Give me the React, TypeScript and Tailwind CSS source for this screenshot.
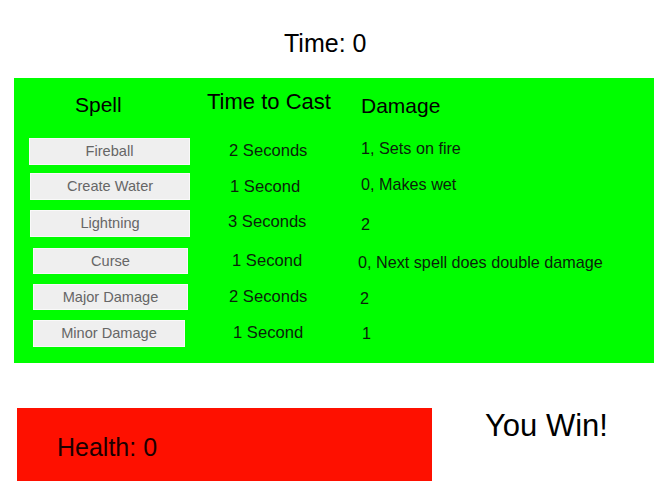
import React from 'react';

interface SpellRow {
  name: string;
  time: string;
  damage: string;
  rowClass: string;
  btnClass: string;
  timeClass: string;
  dmgClass: string;
}

const spells: SpellRow[] = [
  {
    name: 'Fireball',
    time: '2 Seconds',
    damage: '1, Sets on fire',
    rowClass: 'h-[35px]',
    btnClass: 'ml-[15px] w-[161px] h-[27px]',
    timeClass: 'ml-[25px] mt-[4px]',
    dmgClass: 'ml-[7px] mt-[1.5px]'
  },
  {
    name: 'Create Water',
    time: '1 Second',
    damage: '0, Makes wet',
    rowClass: 'h-[37px]',
    btnClass: 'ml-[16px] w-[160px] h-[27px]',
    timeClass: 'ml-[26px] mt-[5px]',
    dmgClass: 'ml-[7px] mt-[2.5px]'
  },
  {
    name: 'Lightning',
    time: '3 Seconds',
    damage: '2',
    rowClass: 'h-[38px]',
    btnClass: 'ml-[16px] w-[160px] h-[27px]',
    timeClass: 'ml-[24px] mt-[3px]',
    dmgClass: 'ml-[7px] mt-[5.5px]'
  },
  {
    name: 'Curse',
    time: '1 Second',
    damage: '0, Next spell does double damage',
    rowClass: 'h-[36px]',
    btnClass: 'ml-[19px] w-[155px] h-[26px]',
    timeClass: 'ml-[28px] mt-[4px]',
    dmgClass: 'ml-[4px] mt-[5.5px]'
  },
  {
    name: 'Major Damage',
    time: '2 Seconds',
    damage: '2',
    rowClass: 'h-[36px]',
    btnClass: 'ml-[19px] w-[155px] h-[26px]',
    timeClass: 'ml-[25px] mt-[4px]',
    dmgClass: 'ml-[6px] mt-[5.5px]'
  },
  {
    name: 'Minor Damage',
    time: '1 Second',
    damage: '1',
    rowClass: 'h-[36px]',
    btnClass: 'ml-[19px] w-[152px] h-[27px]',
    timeClass: 'ml-[29px] mt-[4px]',
    dmgClass: 'ml-[8px] mt-[4.5px]'
  }
];

export default function App() {
  return (
    <div className="w-[670px] h-[500px] bg-white text-black font-['Liberation_Sans',Arial,sans-serif] overflow-hidden">
      {/* timer */}
      <div className="pt-[31px] pl-[284px] text-[25px] leading-[25px]">Time: 0</div>

      {/* spell table */}
      <div className="mt-[22px] ml-[14px] w-[640px] h-[285px] bg-[#00fe00] flex flex-col">
        <div className="flex items-start h-[60px]">
          <div className="w-[190px]">
            <div className="ml-[61px] mt-[16px] text-[21px] leading-[21px]">Spell</div>
          </div>
          <div className="w-[150px]">
            <div className="ml-[3px] mt-[12.5px] text-[22px] leading-[22px]">Time to Cast</div>
          </div>
          <div className="flex-1">
            <div className="ml-[7px] mt-[17px] text-[21px] leading-[21px]">Damage</div>
          </div>
        </div>

        {spells.map((s) => (
          <div key={s.name} className={`flex items-start ${s.rowClass}`}>
            <div className="w-[190px]">
              <button
                className={`${s.btnClass} flex items-center justify-center bg-[#efefef] border border-[#f9f9f9] text-[14.6px] leading-[15px] text-[#666666]`}
              >
                {s.name}
              </button>
            </div>
            <div className="w-[150px]">
              <div className={`${s.timeClass} text-[16.6px] leading-[17px] text-[#0b1f0b]`}>{s.time}</div>
            </div>
            <div className="flex-1">
              <div className={`${s.dmgClass} text-[16.2px] leading-[16px] text-[#0b1f0b]`}>{s.damage}</div>
            </div>
          </div>
        ))}
      </div>

      {/* status */}
      <div className="mt-[45px] flex items-start">
        <div className="ml-[17px] w-[415px] h-[73px] bg-[#fe1000]">
          <div className="ml-[40px] mt-[27px] text-[25px] leading-[25px] text-[#1a0000]">Health: 0</div>
        </div>
        <div className="ml-[53px] mt-[2px] text-[31px] leading-[31px]">You Win!</div>
      </div>
    </div>
  );
}
